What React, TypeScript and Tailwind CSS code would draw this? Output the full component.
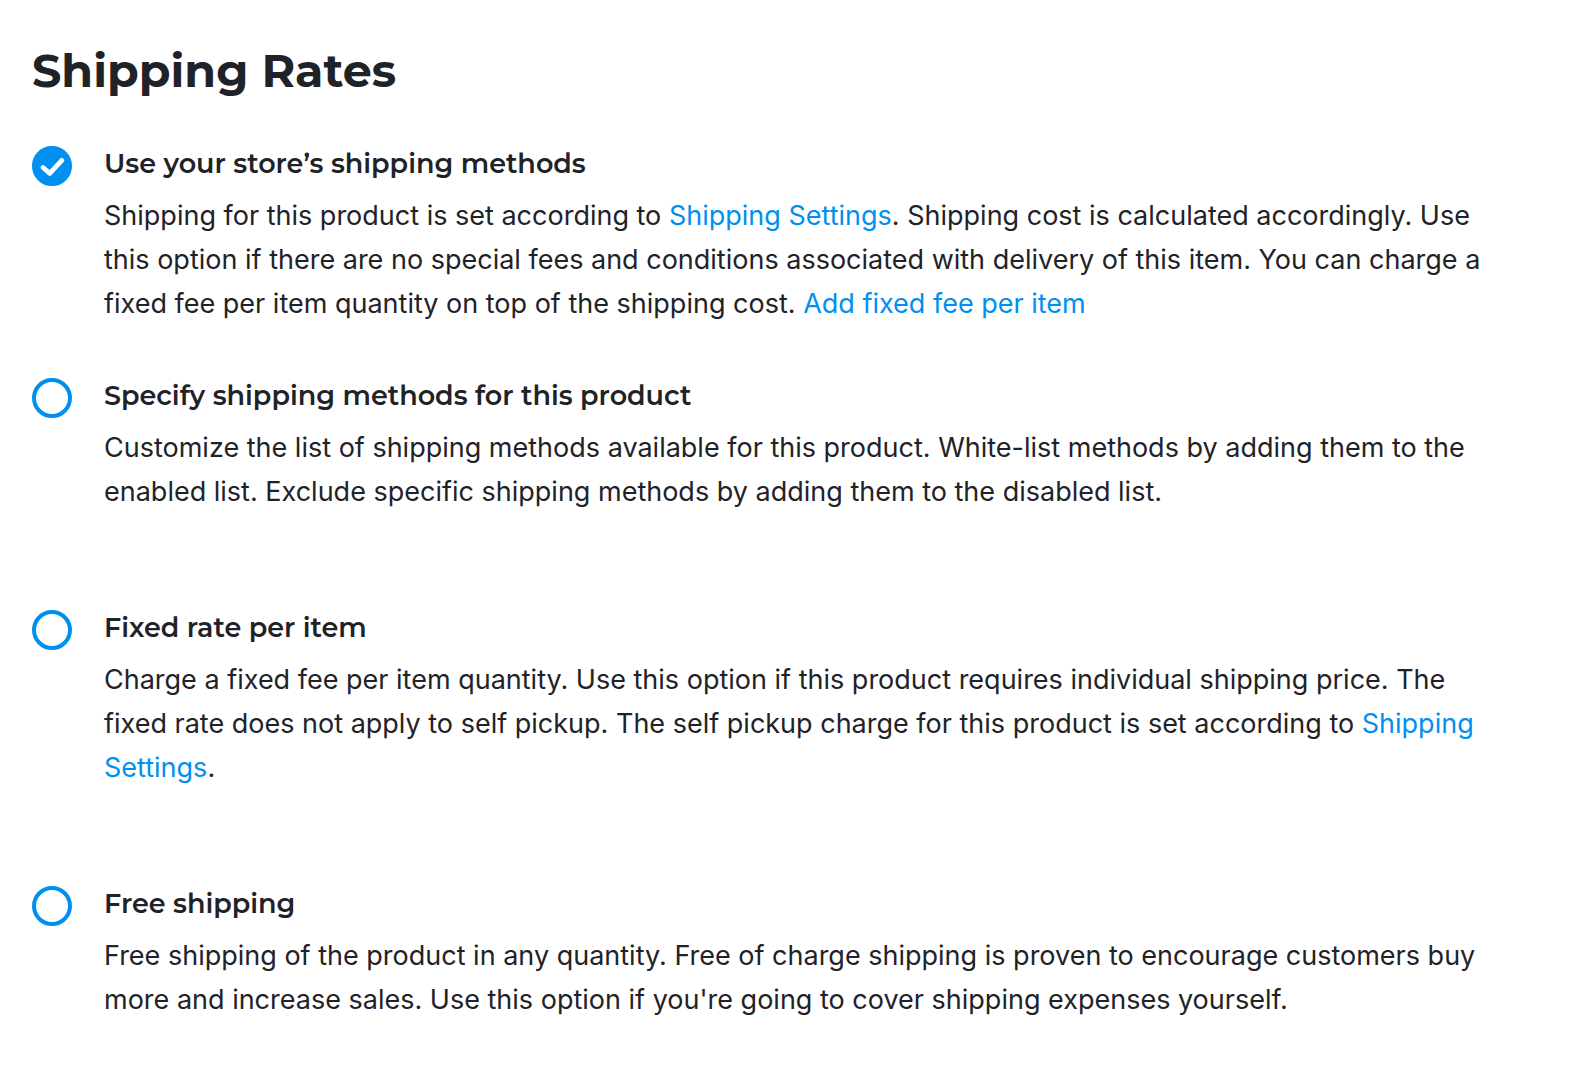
import { ReactNode } from "react";

function TextLink({ children }: { children: ReactNode }) {
  return <a href="#" className="text-[#0090f0]">{children}</a>;
}

type OptionProps = { id: string; title: string; defaultChecked?: boolean; className?: string; children: ReactNode };

function RateOption({ id, title, defaultChecked, className = "", children }: OptionProps) {
  return (
    <div className={`flex gap-8 ${className}`}>
      <div className="grid size-10 shrink-0">
        <input
          type="radio"
          id={id}
          name="shipping-rate"
          defaultChecked={defaultChecked}
          aria-describedby={`${id}-text`}
          className="peer col-start-1 row-start-1 size-10 cursor-pointer appearance-none rounded-full border-4 border-[#0090f0] bg-white checked:bg-[#0090f0]"
        />
        <svg viewBox="0 0 40 40" aria-hidden="true" className="pointer-events-none invisible col-start-1 row-start-1 size-10 peer-checked:visible">
          <path d="M11 21.5 17.8 27.3 29.8 14.4" fill="none" stroke="white" strokeWidth="4.8" strokeLinecap="round" strokeLinejoin="round" />
        </svg>
      </div>
      <div className="min-w-0 flex-1">
        <label htmlFor={id} className="block font-['Montserrat','Inter',sans-serif] text-[27px] leading-9 font-semibold">{title}</label>
        <p id={`${id}-text`} className="mt-3 text-[27px] leading-11">{children}</p>
      </div>
    </div>
  );
}

export default function App() {
  return (
    <main className="bg-white px-8 pt-10 pb-12 font-['Inter',sans-serif] text-[#1f2328]">
      <h1 className="font-['Montserrat','Inter',sans-serif] text-[46px] leading-[62px] font-bold">Shipping Rates</h1>
      <form className="mt-11 pr-12">
        <RateOption id="store" title="Use your store’s shipping methods" defaultChecked>
          Shipping for this product is set according to <TextLink>Shipping Settings</TextLink>. Shipping cost is calculated accordingly. Use this option if there are no special fees and conditions associated with delivery of this item. You can charge a fixed fee per item quantity on top of the shipping cost. <TextLink>Add fixed fee per item</TextLink>
        </RateOption>
        <RateOption id="product" title="Specify shipping methods for this product" className="mt-13">
          Customize the list of shipping methods available for this product. White-list methods by adding them to the enabled list. Exclude specific shipping methods by adding them to the disabled list.
        </RateOption>
        <RateOption id="fixed" title="Fixed rate per item" className="mt-24">
          Charge a fixed fee per item quantity. Use this option if this product requires individual shipping price. The fixed rate does not apply to self pickup. The self pickup charge for this product is set according to <TextLink>Shipping Settings</TextLink>.
        </RateOption>
        <RateOption id="free" title="Free shipping" className="mt-24">
          Free shipping of the product in any quantity. Free of charge shipping is proven to encourage customers buy more and increase sales. Use this option if you're going to cover shipping expenses yourself.
        </RateOption>
      </form>
    </main>
  );
}
